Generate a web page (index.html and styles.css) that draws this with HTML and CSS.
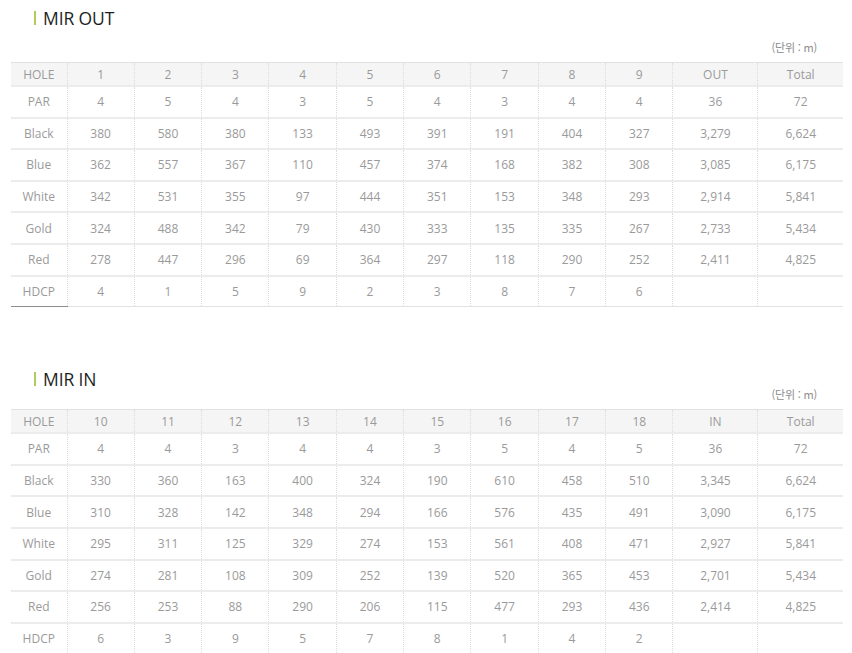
FILE: index.html
```html
<!DOCTYPE html>
<html lang="ko">
<head>
<meta charset="utf-8">
<link rel="stylesheet" href="styles.css">
</head>
<body>
<div class="page">
  <section class="course">
    <h2 class="course-title"><span class="bar"></span>MIR OUT</h2>
    <p class="unit">(단위 : m)</p>
    <table class="score">
      <colgroup>
        <col class="c-first"><col class="c-hole"><col class="c-hole"><col class="c-hole"><col class="c-hole"><col class="c-hole"><col class="c-hole"><col class="c-hole"><col class="c-hole"><col class="c-hole"><col class="c-sum"><col class="c-sum">
      </colgroup>
      <thead>
        <tr><th>HOLE</th><th>1</th><th>2</th><th>3</th><th>4</th><th>5</th><th>6</th><th>7</th><th>8</th><th>9</th><th>OUT</th><th>Total</th></tr>
      </thead>
      <tbody>
        <tr><td>PAR</td><td>4</td><td>5</td><td>4</td><td>3</td><td>5</td><td>4</td><td>3</td><td>4</td><td>4</td><td>36</td><td>72</td></tr>
        <tr><td>Black</td><td>380</td><td>580</td><td>380</td><td>133</td><td>493</td><td>391</td><td>191</td><td>404</td><td>327</td><td>3,279</td><td>6,624</td></tr>
        <tr><td>Blue</td><td>362</td><td>557</td><td>367</td><td>110</td><td>457</td><td>374</td><td>168</td><td>382</td><td>308</td><td>3,085</td><td>6,175</td></tr>
        <tr><td>White</td><td>342</td><td>531</td><td>355</td><td>97</td><td>444</td><td>351</td><td>153</td><td>348</td><td>293</td><td>2,914</td><td>5,841</td></tr>
        <tr><td>Gold</td><td>324</td><td>488</td><td>342</td><td>79</td><td>430</td><td>333</td><td>135</td><td>335</td><td>267</td><td>2,733</td><td>5,434</td></tr>
        <tr><td>Red</td><td>278</td><td>447</td><td>296</td><td>69</td><td>364</td><td>297</td><td>118</td><td>290</td><td>252</td><td>2,411</td><td>4,825</td></tr>
        <tr class="last"><td class="mark">HDCP</td><td>4</td><td>1</td><td>5</td><td>9</td><td>2</td><td>3</td><td>8</td><td>7</td><td>6</td><td></td><td></td></tr>
      </tbody>
    </table>
  </section>

  <section class="course course-in">
    <h2 class="course-title"><span class="bar"></span>MIR IN</h2>
    <p class="unit">(단위 : m)</p>
    <table class="score">
      <colgroup>
        <col class="c-first"><col class="c-hole"><col class="c-hole"><col class="c-hole"><col class="c-hole"><col class="c-hole"><col class="c-hole"><col class="c-hole"><col class="c-hole"><col class="c-hole"><col class="c-sum"><col class="c-sum">
      </colgroup>
      <thead>
        <tr><th>HOLE</th><th>10</th><th>11</th><th>12</th><th>13</th><th>14</th><th>15</th><th>16</th><th>17</th><th>18</th><th>IN</th><th>Total</th></tr>
      </thead>
      <tbody>
        <tr><td>PAR</td><td>4</td><td>4</td><td>3</td><td>4</td><td>4</td><td>3</td><td>5</td><td>4</td><td>5</td><td>36</td><td>72</td></tr>
        <tr><td>Black</td><td>330</td><td>360</td><td>163</td><td>400</td><td>324</td><td>190</td><td>610</td><td>458</td><td>510</td><td>3,345</td><td>6,624</td></tr>
        <tr><td>Blue</td><td>310</td><td>328</td><td>142</td><td>348</td><td>294</td><td>166</td><td>576</td><td>435</td><td>491</td><td>3,090</td><td>6,175</td></tr>
        <tr><td>White</td><td>295</td><td>311</td><td>125</td><td>329</td><td>274</td><td>153</td><td>561</td><td>408</td><td>471</td><td>2,927</td><td>5,841</td></tr>
        <tr><td>Gold</td><td>274</td><td>281</td><td>108</td><td>309</td><td>252</td><td>139</td><td>520</td><td>365</td><td>453</td><td>2,701</td><td>5,434</td></tr>
        <tr><td>Red</td><td>256</td><td>253</td><td>88</td><td>290</td><td>206</td><td>115</td><td>477</td><td>293</td><td>436</td><td>2,414</td><td>4,825</td></tr>
        <tr class="last"><td class="mark">HDCP</td><td>6</td><td>3</td><td>9</td><td>5</td><td>7</td><td>8</td><td>1</td><td>4</td><td>2</td><td></td><td></td></tr>
      </tbody>
    </table>
  </section>
</div>
</body>
</html>
```

FILE: styles.css
```css
html, body {
  margin: 0;
  padding: 0;
  background: #fff;
}

.page {
  padding: 8px 9px 0 11px;
  font-family: "Open Sans", "Noto Sans CJK KR", sans-serif;
}

.course-title {
  display: flex;
  align-items: center;
  margin: 0 0 0 23px;
  height: 20px;
  font-size: 17.5px;
  font-weight: 400;
  line-height: 20px;
  color: #1e1e1e;
  letter-spacing: -0.1px;
}

.bar {
  display: block;
  width: 2px;
  height: 14px;
  margin-right: 7px;
  background: #b2cc5c;
}

.unit {
  margin: 12px 0 0 0;
  height: 15px;
  line-height: 15px;
  text-align: right;
  padding-right: 26px;
  font-size: 11px;
  color: #8c8c8c;
  font-family: "Noto Sans CJK KR", "Open Sans", sans-serif;
  letter-spacing: -0.2px;
}

.course-in {
  margin-top: 62px;
}

.course-in .unit {
  margin-top: -2px;
}

.score {
  margin-top: 7px;
  width: 832px;
  table-layout: fixed;
  border-collapse: collapse;
  font-size: 12px;
  color: #9a9a9a;
}

.c-first { width: 56px; }
.c-hole { width: 67.33px; }
.c-sum { width: 85px; }

.score th,
.score td {
  padding: 0;
  text-align: center;
  font-weight: 400;
  border-left: 1px dotted #dcdcdc;
  border-bottom: 1px solid #e4e4e4;
}

.score th:first-child,
.score td:first-child {
  border-left: none;
}

.score thead th {
  height: 22px;
  background: #f5f5f5;
  border-top: 1px solid #e2e2e2;
  border-bottom: 2px solid #ececec;
}

.score tbody td {
  height: 29.6px;
  border-bottom: 2px solid #ececec;
}

.score tbody tr.last td {
  border-bottom: 1px solid #e2e2e2;
}

.score tbody tr.last td.mark {
  border-bottom: 1px solid #8c8c8c;
}
```
